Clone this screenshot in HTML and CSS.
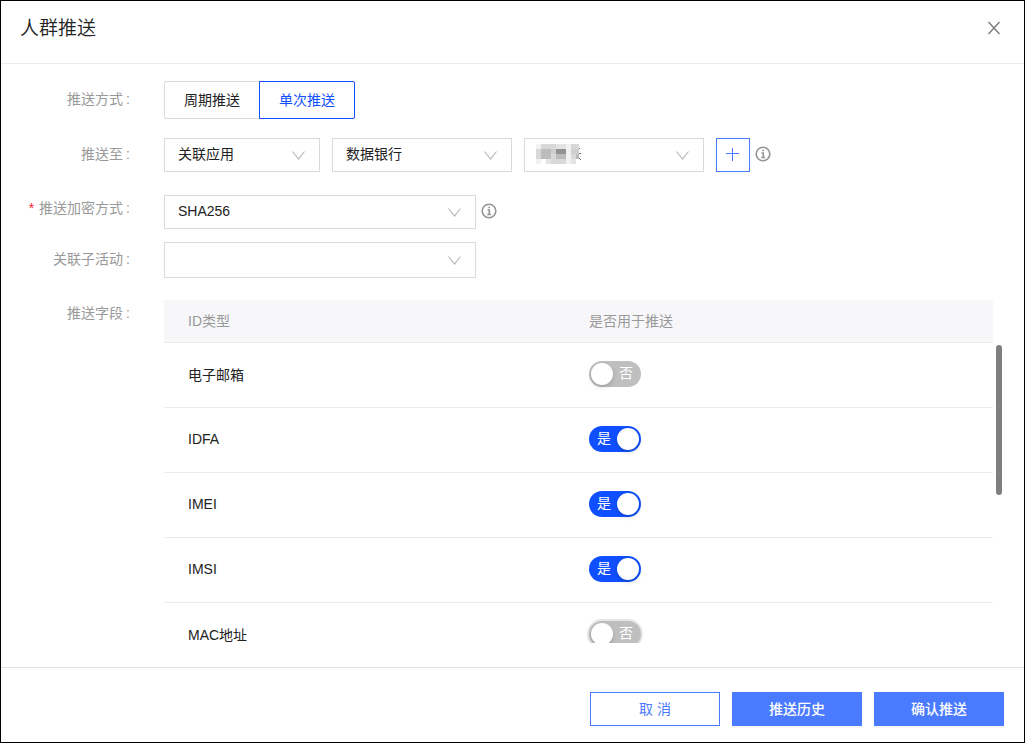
FILE: index.html
```
<!DOCTYPE html>
<html lang="zh-CN">
<head>
    <meta charset="UTF-8">
    <meta name="viewport" content="width=device-width, initial-scale=1.0">
    <title>人群推送</title>
    <link rel="stylesheet" href="styles.css">
</head>
<body>
    <div class="modal">
        <header class="modal-header">
            <h1>人群推送</h1>
            <button type="button" class="close" aria-label="关闭">
                <svg width="14" height="14" viewBox="0 0 14 14"><path d="M1.500 1L12.500 13M12.500 1L1.500 13"/></svg>
            </button>
        </header>

        <form class="modal-body" id="pushForm">
            <div class="row row-mode">
                <span class="label">推送方式<i>:</i></span>
                <div class="radio-group">
                    <label><input type="radio" name="mode" value="cycle"><span>周期推送</span></label>
                    <label><input type="radio" name="mode" value="once" checked><span>单次推送</span></label>
                </div>
            </div>

            <div class="row row-target">
                <label class="label" for="target">推送至<i>:</i></label>
                <div class="controls">
                    <div class="select select-sm">
                        <select id="target"><option>关联应用</option></select>
                        <svg class="arrow" viewBox="0 0 13 9"><path d="M.5.5l6 7.500 6-7.500"/></svg>
                    </div>
                    <div class="select select-md">
                        <select aria-label="应用"><option>数据银行</option></select>
                        <svg class="arrow" viewBox="0 0 13 9"><path d="M.5.5l6 7.500 6-7.500"/></svg>
                    </div>
                    <div class="select select-md">
                        <select aria-label="账号"><option></option></select>
                        <svg class="mask" viewBox="0 0 48 20" shape-rendering="crispEdges">
                            <path fill="#f1f1f1" d="M0 0h5v5H0zM30 0h5v20h-5zM0 15h5v5H0z"/>
                            <path fill="#d8d8d8" d="M5 0h10v5H5zM0 5h5v10H0zM15 0h5v5h-5zM15 10h5v10h-5zM35 0h8v15h-8zM20 15h10v5H20z"/>
                            <path fill="#e4e4e4" d="M20 0h10v5H20zM10 15h5v5h-5zM35 15h5v5h-5z"/>
                            <path fill="#bcbcbc" d="M5 5h10v10H5zM20 10h10v5H20zM40 10h3v5h-3z"/>
                            <path fill="#cfcfcf" d="M15 5h5v5h-5zM35 5h8v5h-8z"/>
                            <path fill="#929292" d="M20 5h10v5H20z"/>
                            <path fill="#666" d="M43 4h1v1h-1zM43 9h2v1h-2zM43 14h1v1h-1zM44 15h1v1h-1z"/>
                        </svg>
                        <svg class="arrow" viewBox="0 0 13 9"><path d="M.5.5l6 7.500 6-7.500"/></svg>
                    </div>
                    <button type="button" class="add" aria-label="添加">
                        <svg width="14" height="14" viewBox="0 0 14 14"><path d="M6.500 0v13M0 5.500h13"/></svg>
                    </button>
                </div>
                <svg class="info" viewBox="0 0 16 16"><circle cx="8" cy="8" r="6.800"/><path d="M6.500 7h1.800v4.500M6.300 11.500h3.700M7.300 4.500h1.700"/></svg>
            </div>

            <div class="row row-encrypt">
                <label class="label required" for="encrypt">推送加密方式<i>:</i></label>
                <div class="select select-lg">
                    <select id="encrypt"><option>SHA256</option></select>
                    <svg class="arrow" viewBox="0 0 13 9"><path d="M.5.5l6 7.500 6-7.500"/></svg>
                </div>
                <svg class="info" viewBox="0 0 16 16"><circle cx="8" cy="8" r="6.800"/><path d="M6.500 7h1.800v4.500M6.300 11.500h3.700M7.300 4.500h1.700"/></svg>
            </div>

            <div class="row row-activity">
                <label class="label" for="activity">关联子活动<i>:</i></label>
                <div class="select select-lg select-tall">
                    <select id="activity"><option></option></select>
                    <svg class="arrow" viewBox="0 0 13 9"><path d="M.5.5l6 7.500 6-7.500"/></svg>
                </div>
            </div>

            <div class="row row-fields">
                <span class="label">推送字段<i>:</i></span>
                <div class="table-wrap">
                    <table>
                        <thead>
                            <tr><th class="col-type">ID类型</th><th>是否用于推送</th></tr>
                        </thead>
                        <tbody>
                            <tr>
                                <td>电子邮箱</td>
                                <td><label class="switch"><input type="checkbox" aria-label="电子邮箱"><span>否</span></label></td>
                            </tr>
                            <tr>
                                <td>IDFA</td>
                                <td><label class="switch"><input type="checkbox" aria-label="IDFA" checked><span>是</span></label></td>
                            </tr>
                            <tr>
                                <td>IMEI</td>
                                <td><label class="switch"><input type="checkbox" aria-label="IMEI" checked><span>是</span></label></td>
                            </tr>
                            <tr>
                                <td>IMSI</td>
                                <td><label class="switch"><input type="checkbox" aria-label="IMSI" checked><span>是</span></label></td>
                            </tr>
                            <tr>
                                <td>MAC地址</td>
                                <td><label class="switch active"><input type="checkbox" aria-label="MAC地址"><span>否</span></label></td>
                            </tr>
                        </tbody>
                    </table>
                    <div class="scroll-thumb"></div>
                </div>
            </div>
        </form>

        <footer class="modal-footer">
            <button type="button" class="btn">取 消</button>
            <button type="button" class="btn btn-primary">推送历史</button>
            <button type="submit" form="pushForm" class="btn btn-primary">确认推送</button>
        </footer>
    </div>

    <script>
        document.querySelectorAll('.switch input').forEach(input => {
            input.addEventListener('change', () => {
                input.nextElementSibling.textContent = input.checked ? '是' : '否';
            });
        });

        document.getElementById('pushForm').addEventListener('submit', event => event.preventDefault());
    </script>
</body>
</html>
```
FILE: styles.css
```
:root {
    --primary-color: #4a7aff;
    --active-color: #0f4fff;
    --text-color: #222;
    --label-color: #999;
    --border-color: #d9d9d9;
    --line-color: #ebebeb;
}

* {
    box-sizing: border-box;
}

body {
    margin: 0;
    font-family: "Liberation Sans", "Noto Sans CJK SC", sans-serif;
    font-size: 14px;
    color: var(--text-color);
    background-color: white;
}

button, select {
    font: inherit;
    color: inherit;
    cursor: pointer;
}

svg {
    fill: none;
    stroke: currentColor;
}

.modal {
    display: flex;
    flex-direction: column;
    height: 100vh;
    border: 1px solid #000;
}

.modal-header {
    display: flex;
    align-items: center;
    justify-content: space-between;
    padding: 12px 20px 18px 19px;
    border-bottom: 1px solid var(--line-color);
}

h1 {
    margin: 0;
    font-size: 19px;
    font-weight: 350;
    line-height: 32px;
}

.close {
    display: flex;
    padding: 2px 3px 4px;
    border: none;
    background: none;
    color: #777;
    stroke-width: 1.3;
}

.modal-body {
    flex: 1;
    min-height: 0;
    overflow: hidden;
    padding: 17px 31px 0 0;
    margin-bottom: 24px;
}

.row {
    display: flex;
    align-items: center;
}

.row-mode {
    margin-bottom: 19px;
}

.row-target {
    margin-bottom: 23px;
}

.row-encrypt {
    margin-bottom: 13px;
}

.row-encrypt .label {
    align-self: flex-start;
}

.row-activity {
    margin-bottom: 22px;
}

.row-fields {
    align-items: flex-start;
}

.label {
    flex: none;
    width: 163px;
    padding: 0 34px 2px 0;
    line-height: 26px;
    text-align: right;
    color: var(--label-color);
}

.label i {
    margin-left: 3px;
    font-style: normal;
}

.required::before {
    content: "*";
    margin-right: 5px;
    color: #f5222d;
}

.radio-group {
    display: flex;
}

.radio-group input {
    position: absolute;
    opacity: 0;
}

.radio-group span {
    display: block;
    width: 96px;
    line-height: 36px;
    text-align: center;
    border: 1px solid var(--border-color);
    border-radius: 2px 0 0 2px;
    cursor: pointer;
}

.radio-group label + label span {
    margin-left: -1px;
    border-radius: 0 2px 2px 0;
}

.radio-group input:checked + span {
    color: var(--active-color);
    border-color: var(--active-color);
}

.controls {
    display: flex;
    gap: 12px;
}

.select {
    position: relative;
    height: 34px;
}

.select-sm {
    width: 156px;
}

.select-md {
    width: 180px;
}

.select-lg {
    width: 312px;
}

.select-tall {
    height: 36px;
}

.select select {
    appearance: none;
    width: 100%;
    height: 100%;
    padding: 0 32px 2px 13px;
    border: 1px solid var(--border-color);
    border-radius: 0;
    background-color: white;
}

.arrow {
    position: absolute;
    right: 15px;
    top: 50%;
    width: 13px;
    height: 9px;
    margin-top: -4px;
    color: #b8b8b8;
    stroke-width: 1.2;
    pointer-events: none;
}

.mask {
    position: absolute;
    left: 12px;
    top: 6px;
    width: 48px;
    height: 20px;
    stroke: none;
    pointer-events: none;
}

.add {
    display: flex;
    align-items: center;
    justify-content: center;
    width: 34px;
    height: 34px;
    padding: 0;
    border: 1px solid var(--primary-color);
    background-color: white;
    color: var(--primary-color);
}

.info {
    width: 16px;
    height: 16px;
    margin: 0 0 2px 5px;
    color: #949494;
    stroke-width: 1.6;
}

.table-wrap {
    position: relative;
    flex: 1;
}

table {
    width: 100%;
    table-layout: fixed;
    border-collapse: separate;
    border-spacing: 0;
}

th, td {
    padding: 0 24px 2px;
    text-align: left;
    border-bottom: 1px solid var(--line-color);
}

th {
    height: 43px;
    font-weight: 400;
    color: var(--label-color);
    background-color: #f7f7f9;
}

td {
    height: 65px;
}

.col-type {
    width: 401px;
}

.scroll-thumb {
    position: absolute;
    top: 45px;
    right: -9px;
    width: 6px;
    height: 150px;
    border-radius: 3px;
    background-color: #808080;
}

.switch {
    position: relative;
    display: block;
    width: 52px;
    height: 26px;
}

.switch input {
    appearance: none;
    display: block;
    width: 52px;
    height: 26px;
    margin: 0;
    border-radius: 13px;
    background-color: #bfbfbf;
    cursor: pointer;
}

.switch input::before {
    content: "";
    position: absolute;
    left: 2px;
    top: 2px;
    width: 22px;
    height: 22px;
    border-radius: 50%;
    background-color: white;
    box-shadow: 0 2px 4px rgba(0, 35, 11, 0.2);
}

.switch input:checked {
    background-color: var(--active-color);
}

.switch input:checked::before {
    left: 28px;
}

.switch span {
    position: absolute;
    left: 30px;
    top: 0;
    line-height: 24px;
    color: white;
    pointer-events: none;
}

.switch input:checked + span {
    left: 8px;
}

.switch.active input {
    box-shadow: 0 0 0 2px rgba(0, 0, 0, 0.1);
}

.modal-footer {
    display: flex;
    justify-content: flex-end;
    gap: 12px;
    padding: 24px 20px 16px;
    border-top: 1px solid #e3e3e3;
}

.btn {
    width: 130px;
    height: 34px;
    padding: 0 0 2px;
    border: 1px solid var(--primary-color);
    background-color: white;
    color: var(--primary-color);
}

.btn-primary {
    background-color: var(--primary-color);
    font-weight: 500;
    color: white;
    box-shadow: 0 2px 0 rgba(0, 0, 0, 0.04);
}
```
